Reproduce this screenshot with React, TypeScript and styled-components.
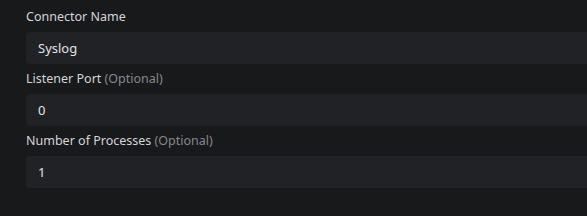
import React from "react";
import styled, { createGlobalStyle } from "styled-components";

const Global = createGlobalStyle`
  html, body { margin: 0; padding: 0; background: #18191b; overflow: hidden; }
  body { font-family: "Noto Sans", "Open Sans", sans-serif; }
`;

const Form = styled.div`
  box-sizing: border-box;
  display: flex;
  flex-direction: column;
  gap: 5px;
  padding: 7px 0 0 26px;
  width: 100vw;
`;

const Field = styled.div`
  display: flex;
  flex-direction: column;
  gap: 5px;
`;

const Label = styled.label`
  font-size: 12.5px;
  line-height: 20px;
  color: #d4d5d7;
`;

const Optional = styled.span`
  color: #85878b;
`;

const Input = styled.input`
  box-sizing: border-box;
  height: 32px;
  width: 100%;
  border: none;
  outline: none;
  border-radius: 4px 0 0 4px;
  background: #212226;
  color: #e2e3e5;
  font-family: inherit;
  font-size: 13px;
  padding: 0 12px;
`;

const fields = [
  { label: "Connector Name", optional: false, value: "Syslog" },
  { label: "Listener Port", optional: true, value: "0" },
  { label: "Number of Processes", optional: true, value: "1" },
];

export default function App() {
  return (
    <>
      <Global />
      <Form>
        {fields.map((f) => (
          <Field key={f.label}>
            <Label>
              {f.label}
              {f.optional && <Optional> (Optional)</Optional>}
            </Label>
            <Input defaultValue={f.value} />
          </Field>
        ))}
      </Form>
    </>
  );
}
